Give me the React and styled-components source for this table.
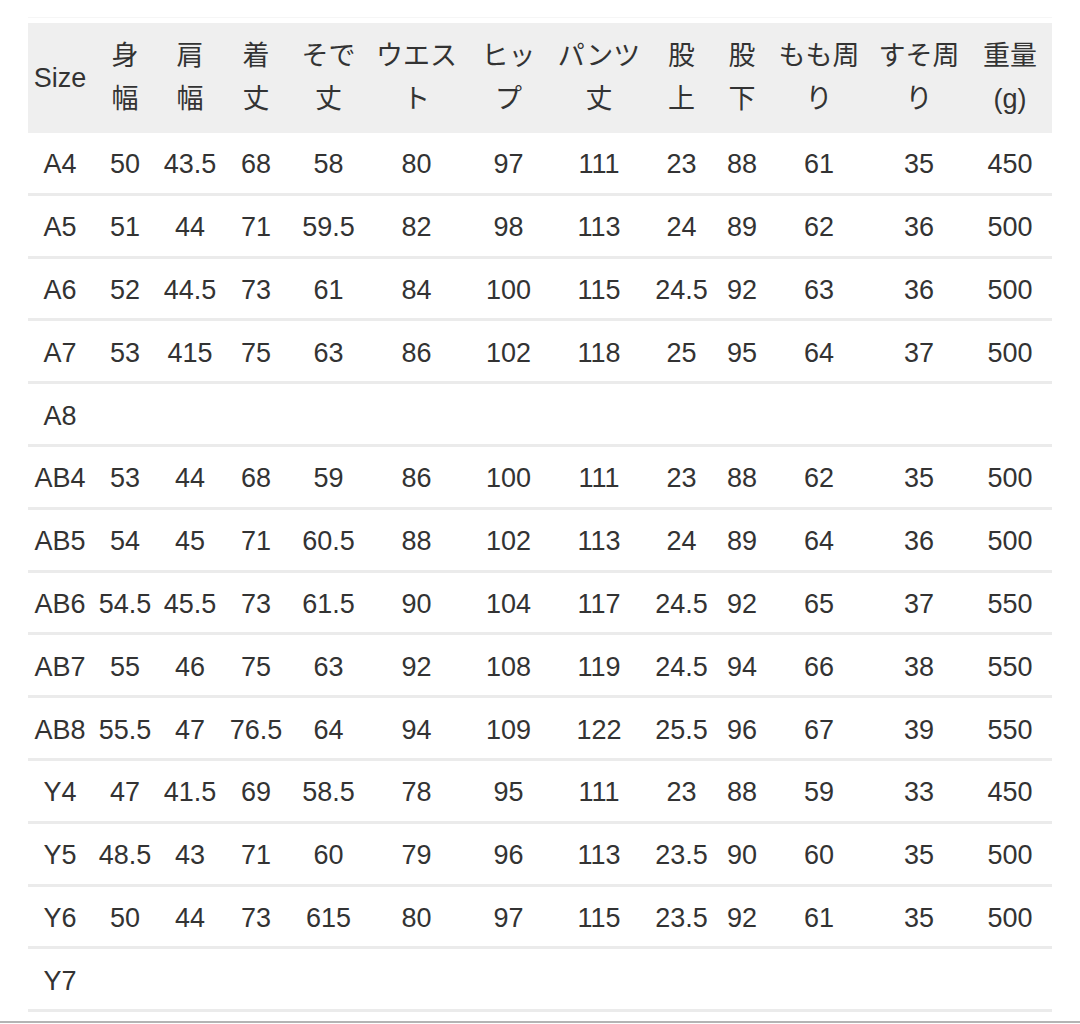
import React from 'react';
import styled, { createGlobalStyle } from 'styled-components';

const GlobalStyle = createGlobalStyle`
    body {
        margin: 0;
        background: #fff;
        font-family: "Liberation Sans", "Noto Sans CJK JP", sans-serif;
        color: #333;
    }
`;

const Page = styled.div`
    display: flex;
    flex-direction: column;
    padding-top: 17px;
`;

const TopRule = styled.div`
    height: 1px;
    width: 1024px;
    margin-left: 28px;
    margin-bottom: 5px;
    background: #f6f6f6;
`;

const Table = styled.table`
    border-collapse: collapse;
    table-layout: fixed;
    width: 1024px;
    margin-left: 28px;
    font-size: 27px;
`;

const Col = styled.col`
    width: ${p => p.$w}px;
`;

const HeadCell = styled.th`
    background: #efefef;
    font-weight: normal;
    line-height: 43px;
    padding: 12px 0;
    height: 86px;
    text-align: center;
    vertical-align: middle;
    white-space: nowrap;
`;

const Row = styled.tr`
    border-bottom: 3px solid #ebebeb;
`;

const Cell = styled.td`
    height: 55.8px;
    padding: 4px 0 0;
    text-align: center;
    vertical-align: middle;
    white-space: nowrap;
    line-height: 1;
`;

const BottomRule = styled.div`
    height: 2px;
    margin-top: 9px;
    background: #b4b4b4;
`;

const widths = [64, 66, 64, 68, 77, 99, 85, 96, 69, 52, 102, 98, 84];

const headers = [
    ['Size'],
    ['身', '幅'],
    ['肩', '幅'],
    ['着', '丈'],
    ['そで', '丈'],
    ['ウエス', 'ト'],
    ['ヒッ', 'プ'],
    ['パンツ', '丈'],
    ['股', '上'],
    ['股', '下'],
    ['もも周', 'り'],
    ['すそ周', 'り'],
    ['重量', '(g)'],
];

const rows = [
    ['A4', '50', '43.5', '68', '58', '80', '97', '111', '23', '88', '61', '35', '450'],
    ['A5', '51', '44', '71', '59.5', '82', '98', '113', '24', '89', '62', '36', '500'],
    ['A6', '52', '44.5', '73', '61', '84', '100', '115', '24.5', '92', '63', '36', '500'],
    ['A7', '53', '415', '75', '63', '86', '102', '118', '25', '95', '64', '37', '500'],
    ['A8'],
    ['AB4', '53', '44', '68', '59', '86', '100', '111', '23', '88', '62', '35', '500'],
    ['AB5', '54', '45', '71', '60.5', '88', '102', '113', '24', '89', '64', '36', '500'],
    ['AB6', '54.5', '45.5', '73', '61.5', '90', '104', '117', '24.5', '92', '65', '37', '550'],
    ['AB7', '55', '46', '75', '63', '92', '108', '119', '24.5', '94', '66', '38', '550'],
    ['AB8', '55.5', '47', '76.5', '64', '94', '109', '122', '25.5', '96', '67', '39', '550'],
    ['Y4', '47', '41.5', '69', '58.5', '78', '95', '111', '23', '88', '59', '33', '450'],
    ['Y5', '48.5', '43', '71', '60', '79', '96', '113', '23.5', '90', '60', '35', '500'],
    ['Y6', '50', '44', '73', '615', '80', '97', '115', '23.5', '92', '61', '35', '500'],
    ['Y7'],
];

const App = () => (
    <Page>
        <GlobalStyle />
        <TopRule />
        <Table>
            <colgroup>
                {widths.map((w, i) => <Col key={i} $w={w} />)}
            </colgroup>
            <thead>
                <tr>
                    {headers.map((h, i) => (
                        <HeadCell key={i}>
                            {h.map((line, j) => (
                                <React.Fragment key={j}>
                                    {j > 0 && <br />}
                                    {line}
                                </React.Fragment>
                            ))}
                        </HeadCell>
                    ))}
                </tr>
            </thead>
            <tbody>
                {rows.map(r => (
                    <Row key={r[0]}>
                        {widths.map((_, i) => <Cell key={i}>{r[i] || ''}</Cell>)}
                    </Row>
                ))}
            </tbody>
        </Table>
        <BottomRule />
    </Page>
);

export default App;
